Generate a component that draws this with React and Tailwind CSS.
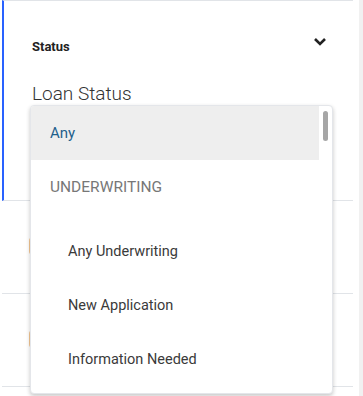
import React from "react";

export default function App() {
  const font = { fontFamily: "Roboto, 'Liberation Sans', sans-serif" };
  return (
    <div className="relative w-[363px] h-[396px] bg-white overflow-hidden flex" style={font}>
      <div className="ml-[2px] w-[351px] flex flex-col">
        <div className="h-[201px] shrink-0 border-l-2 border-[#2962ff] border-t border-t-[#e1e4e8] border-b border-b-[#e1e4e8] pl-[28px] pr-[26px] pt-[36px]">
          <div className="flex items-center justify-between">
            <span className="text-[13px] font-bold text-[#222]">Status</span>
            <svg width="14" height="10" viewBox="0 0 14 10" className="-mt-[10px]">
              <polyline points="2,2 7,7 12,2" fill="none" stroke="#222" strokeWidth="2.6" />
            </svg>
          </div>
          <div className="mt-[27px] text-[19px] font-light text-[#333] leading-none">Loan Status</div>
        </div>
        <div className="h-[93px] shrink-0 border-b border-[#e1e4e8] relative">
          <div className="absolute left-[27px] top-[36px] w-[18px] h-[18px] border-2 border-[#f6c894] rounded-sm" />
        </div>
        <div className="h-[93px] shrink-0 border-b border-[#e1e4e8] relative">
          <div className="absolute left-[27px] top-[36px] w-[18px] h-[18px] border-2 border-[#f6c894] rounded-sm" />
        </div>
        <div className="flex-1" />
      </div>
      <div className="ml-[6px] w-[4px] bg-[#f1f1f1]" />

      <div className="absolute left-[30px] top-[105px] w-[303px] h-[289px] bg-white rounded-[4px] border border-[#e4e6ea] shadow-[0_2px_4px_rgba(0,0,0,0.22)] overflow-hidden flex">
        <div className="flex-1 flex flex-col">
          <div className="h-[54px] shrink-0 bg-[#eeeeee] flex items-center pl-[19px] text-[15px] text-[#1f5f8b]">Any</div>
          <div className="h-[56px] shrink-0 flex items-center pl-[19px] text-[15.5px] text-[#777]">UNDERWRITING</div>
          <div className="mt-[9px] h-[54px] shrink-0 flex items-center pl-[37px] text-[14.5px] text-[#3a3a3a]">Any Underwriting</div>
          <div className="h-[54px] shrink-0 flex items-center pl-[37px] text-[14.5px] text-[#3a3a3a]">New Application</div>
          <div className="h-[54px] shrink-0 flex items-center pl-[37px] text-[14.5px] text-[#3a3a3a]">Information Needed</div>
        </div>
        <div className="w-[13px] shrink-0 relative">
          <div className="absolute left-[4px] top-[5px] w-[5px] h-[30px] rounded-full bg-[#a6a6a6]" />
        </div>
      </div>
    </div>
  );
}
